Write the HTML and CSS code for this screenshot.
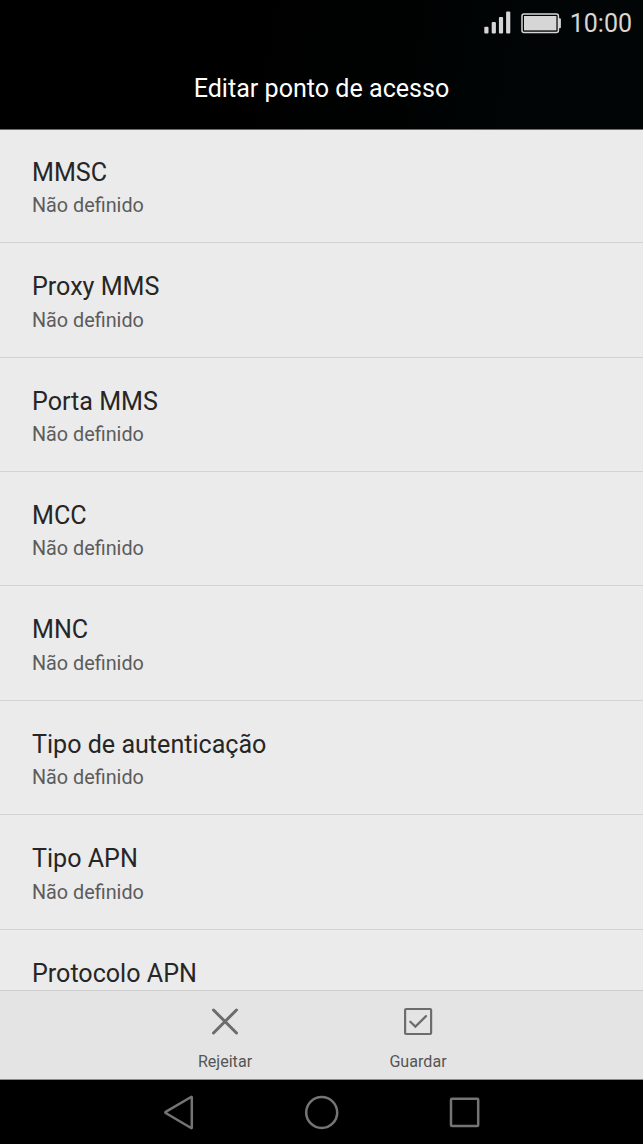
FILE: index.html
```html
<!DOCTYPE html>
<html lang="pt">
<head>
<meta charset="utf-8">
<title>Editar ponto de acesso</title>
<link rel="stylesheet" href="styles.css">
</head>
<body>
<div class="screen">
  <header class="top">
    <div class="status">
      <svg class="signal" width="28" height="24" viewBox="0 0 28 24" fill="#d6d6d6">
        <rect x="0.3" y="15.8" width="4.2" height="6.7" rx="1"/>
        <rect x="7.7" y="11" width="4.2" height="11.5" rx="1"/>
        <rect x="14.9" y="6" width="4.2" height="16.5" rx="1"/>
        <rect x="22.1" y="0.5" width="4.2" height="22" rx="1"/>
      </svg>
      <svg class="battery" width="41" height="21" viewBox="0 0 41 21">
        <rect x="1" y="1" width="36.4" height="18.4" rx="2" fill="none" stroke="#d6d6d6" stroke-width="1.5"/>
        <rect x="3" y="3" width="32.4" height="14.4" fill="#d6d6d6"/>
        <rect x="37.4" y="5.3" width="2.5" height="10" rx="1" fill="#d6d6d6"/>
      </svg>
      <span class="clock">10:00</span>
    </div>
    <h1 class="title">Editar ponto de acesso</h1>
  </header>
  <main class="list">
    <div class="row"><div class="name">MMSC</div><div class="value">Não definido</div></div>
    <div class="row"><div class="name">Proxy MMS</div><div class="value">Não definido</div></div>
    <div class="row"><div class="name">Porta MMS</div><div class="value">Não definido</div></div>
    <div class="row"><div class="name">MCC</div><div class="value">Não definido</div></div>
    <div class="row"><div class="name">MNC</div><div class="value">Não definido</div></div>
    <div class="row"><div class="name">Tipo de autenticação</div><div class="value">Não definido</div></div>
    <div class="row"><div class="name">Tipo APN</div><div class="value">Não definido</div></div>
    <div class="row"><div class="name">Protocolo APN</div></div>
  </main>
  <div class="actions">
    <div class="action">
      <svg width="32" height="32" viewBox="0 0 32 32" fill="none" stroke="#6c6c6c" stroke-width="3" stroke-linecap="round"><path d="M4.5 5 27.5 28M27.5 5 4.5 28"/></svg>
      <span class="label">Rejeitar</span>
    </div>
    <div class="action">
      <svg width="32" height="32" viewBox="0 0 32 32" fill="none" stroke="#6c6c6c" stroke-width="2.2" stroke-linecap="round"><rect x="3.1" y="4" width="26" height="25" rx="1"/><path d="M8.3 16.7 13.4 21.6 24 11.1"/></svg>
      <span class="label">Guardar</span>
    </div>
  </div>
  <nav class="navbar">
    <svg width="36" height="36" viewBox="0 0 36 36"><path d="M30.8 3.2V33.8Q30.8 34.4 30.1 34L4.7 19Q3.9 18.4 4.7 17.9L30.1 3Q30.8 2.6 30.8 3.2Z"/></svg>
    <svg width="36" height="36" viewBox="0 0 36 36"><circle cx="17.7" cy="18.5" r="15.5"/></svg>
    <svg width="36" height="36" viewBox="0 0 36 36"><rect x="4" y="4.7" width="27.2" height="27.2" rx="1"/></svg>
  </nav>
</div>
</body>
</html>
```
FILE: styles.css
```css
* { box-sizing: border-box; }
body { margin: 0; font-family: Roboto, sans-serif; background: #000; }
.screen {
  width: 643px;
  height: 1144px;
  overflow: hidden;
  display: grid;
  grid-template-rows: 130px 860px 90px 64px;
}
.top {
  background: linear-gradient(100deg, #000 40%, #010505 85%);
  border-bottom: 1px solid #6d6b6e;
}
.status {
  display: flex;
  align-items: center;
  justify-content: flex-end;
  height: 46px;
  padding-right: 11px;
}
.signal { margin-right: 9px; }
.battery { margin-right: 8px; }
.clock { font-size: 25px; line-height: 46px; color: #d6d6d6; padding-top: 2px; }
.title {
  margin: 0;
  font-size: 25.1px;
  font-weight: 400;
  line-height: 32px;
  padding-top: 27px;
  color: #fff;
  text-align: center;
}
.list { background: #ebebeb; overflow: hidden; }
.row {
  height: 114.4px;
  padding: 28px 32px 0;
  border-bottom: 1px solid #d3d3d3;
}
.row:first-child { height: 113.3px; padding-top: 27px; }
.name { font-size: 25.1px; line-height: 32px; color: #262626; }
.value { margin-top: 5.4px; font-size: 19.8px; line-height: 24px; color: #5c5c5c; }
.actions {
  display: flex;
  justify-content: center;
  background: #e4e4e4;
  border-top: 1px solid #cdcdcd;
  border-bottom: 1px solid #8b8b8b;
}
.action {
  width: 193px;
  display: flex;
  flex-direction: column;
  align-items: center;
  padding-top: 14px;
}
.label { margin-top: 15px; font-size: 16.1px; line-height: 20px; color: #555; }
.navbar {
  display: flex;
  justify-content: center;
  gap: 107px;
  padding-top: 14px;
  background: #000;
}
.navbar svg { fill: none; stroke: #747474; stroke-width: 2.5; }
```
